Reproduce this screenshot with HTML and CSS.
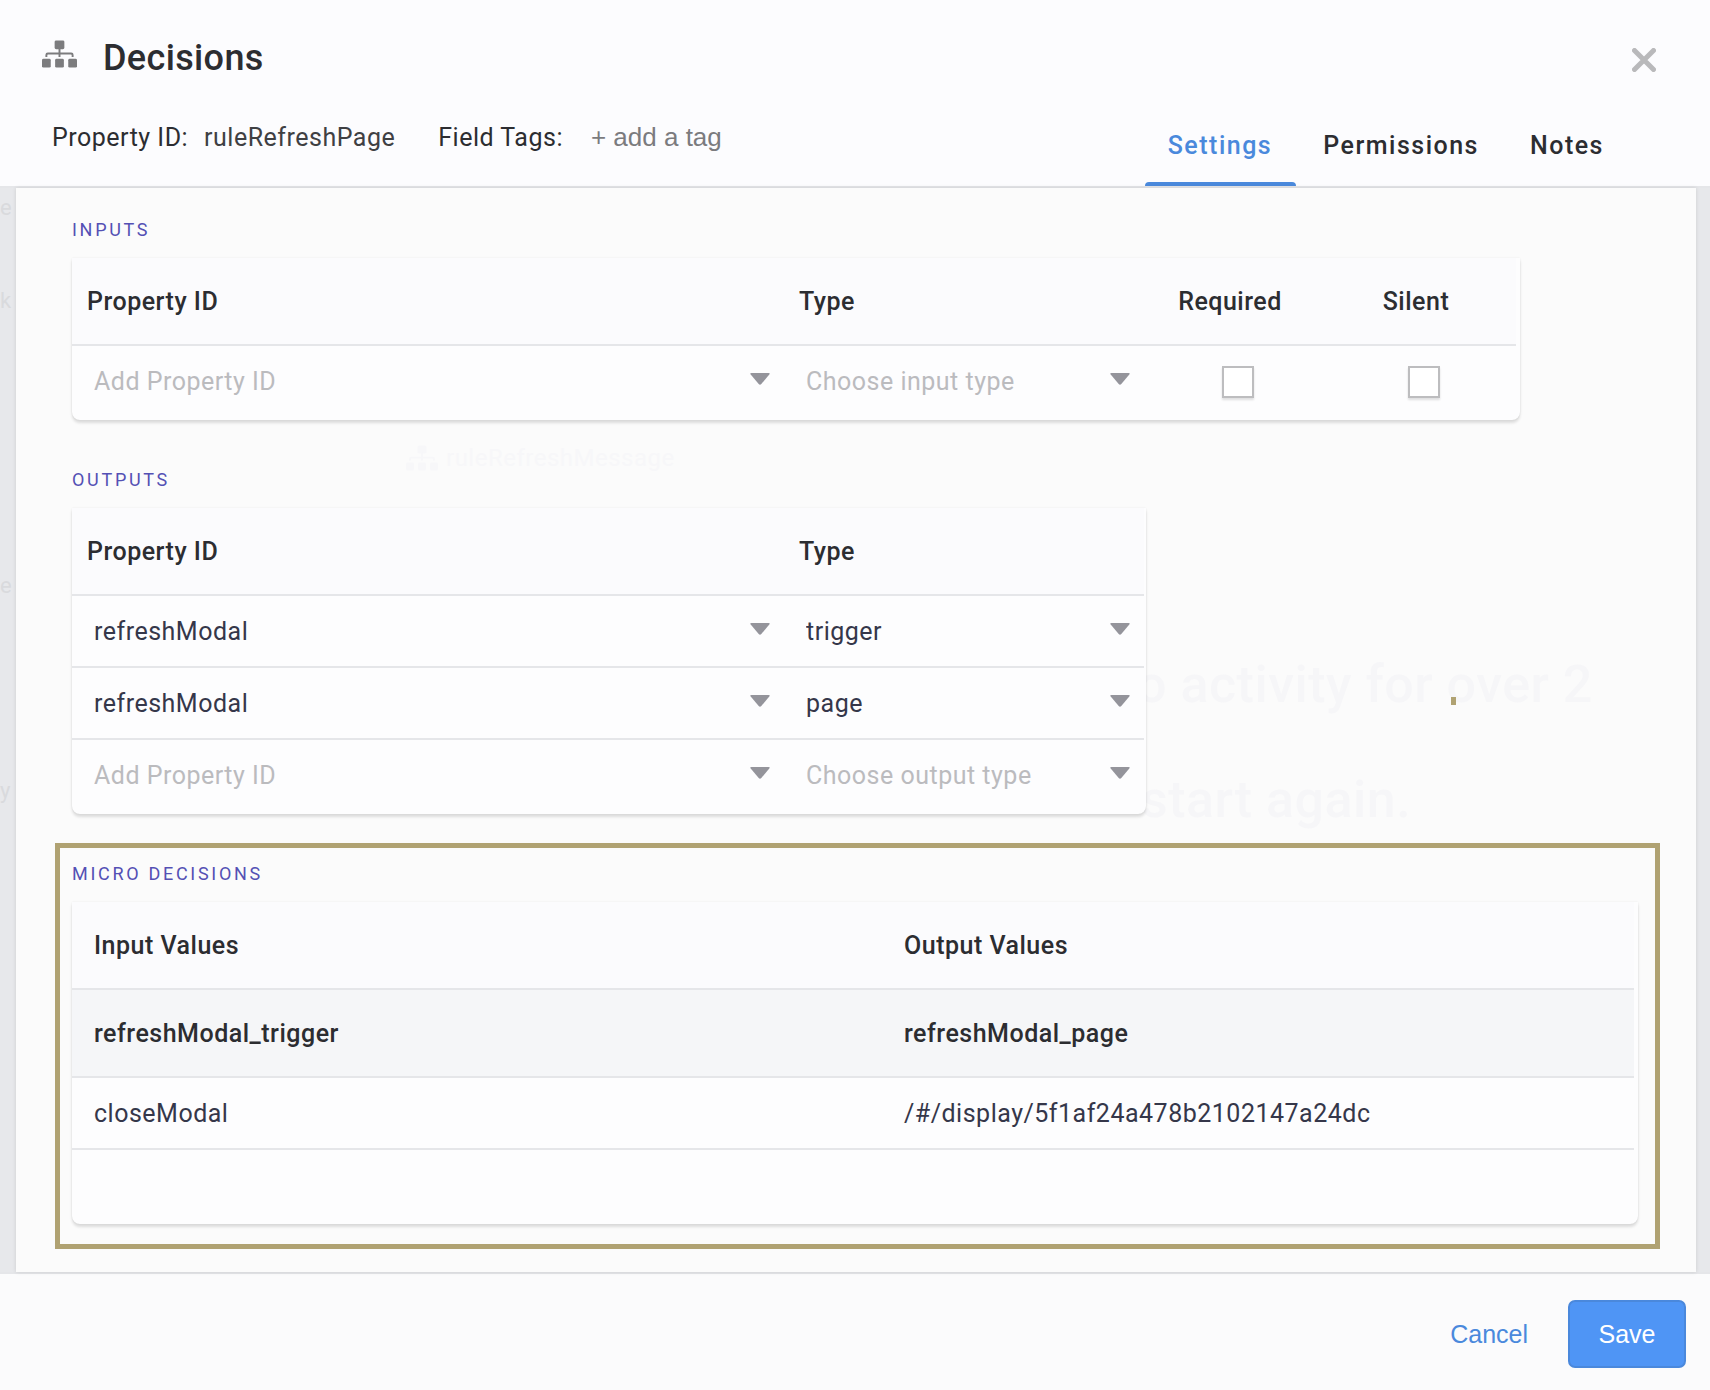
FILE: index.html
```html
<!DOCTYPE html>
<html lang="en">
<head>
<meta charset="utf-8">
<title>Decisions</title>
<meta name="viewport" content="width=device-width, initial-scale=1">
<link rel="stylesheet" href="styles.css">
</head>
<body>
<svg class="defs" aria-hidden="true">
  <symbol id="caret" viewBox="0 0 20 12"><path d="M1.500 0h17q2 0 .8 1.500l-8 9.600q-1.300 1.300-2.600 0l-8-9.600Q-.5 0 1.500 0z"/></symbol>
  <symbol id="tree" viewBox="0 0 36 28">
    <rect x="13" y="0" width="10" height="9" rx="1.500"/>
    <rect x="0" y="19" width="9" height="9" rx="1.500"/>
    <rect x="13.500" y="19" width="9" height="9" rx="1.500"/>
    <rect x="27" y="19" width="9" height="9" rx="1.500"/>
    <path d="M18 8v9M4.500 17v-2q0-1.500 1.500-1.500h24q1.500 0 1.500 1.500v2" fill="none" stroke="currentColor" stroke-width="2"/>
  </symbol>
</svg>
<div class="dialog" role="dialog" aria-labelledby="title">
  <header class="header">
    <div class="title-row">
      <svg class="title-icon" aria-hidden="true"><use href="#tree"/></svg>
      <h1 class="title" id="title">Decisions</h1>
      <button class="close" type="button" aria-label="Close">
        <svg viewBox="0 0 24 24" width="24" height="24" aria-hidden="true"><path d="M2.500 2.500l19 19M21.500 2.500l-19 19"/></svg>
      </button>
    </div>
    <div class="meta-row">
      <div class="meta">
        <span>Property ID:</span>
        <span class="meta-value">ruleRefreshPage</span>
        <span class="meta-tags">Field Tags:</span>
        <button class="add-tag" type="button">+ add a tag</button>
      </div>
      <nav class="tabs">
        <a class="tab tab-active" href="#settings" aria-current="page">Settings</a>
        <a class="tab" href="#permissions">Permissions</a>
        <a class="tab" href="#notes">Notes</a>
      </nav>
    </div>
  </header>

  <main class="body">
    <div class="edge" aria-hidden="true">
      <span class="edge-1">e</span>
      <span class="edge-2">k</span>
      <span class="edge-3">e</span>
      <span class="edge-4">y</span>
    </div>
    <div class="panel" id="settings">
      <div class="ghost" aria-hidden="true">
        <span class="ghost-rule"><svg><use href="#tree"/></svg>ruleRefreshMessage</span>
        <span class="ghost-line ghost-first">o activity for over 2</span>
        <span class="ghost-line ghost-second">start again.</span>
        <span class="marker"></span>
      </div>

      <section class="section">
        <h2 class="label">INPUTS</h2>
        <div class="card card-inputs">
          <table class="grid">
            <colgroup><col class="col-id"><col class="col-type"><col class="col-required"><col class="col-silent"></colgroup>
            <thead><tr><th>Property ID</th><th>Type</th><th class="center">Required</th><th class="center">Silent</th></tr></thead>
            <tbody>
              <tr>
                <td><div class="pick"><select class="empty" aria-label="Input property ID"><option>Add Property ID</option></select><svg><use href="#caret"/></svg></div></td>
                <td><div class="pick"><select class="empty" aria-label="Input type"><option>Choose input type</option></select><svg><use href="#caret"/></svg></div></td>
                <td class="tick"><input type="checkbox" aria-label="Required"></td>
                <td class="tick"><input type="checkbox" aria-label="Silent"></td>
              </tr>
            </tbody>
          </table>
        </div>
      </section>

      <section class="section">
        <h2 class="label">OUTPUTS</h2>
        <div class="card card-outputs">
          <table class="grid">
            <colgroup><col class="col-id"><col class="col-type"></colgroup>
            <thead><tr><th>Property ID</th><th>Type</th></tr></thead>
            <tbody>
              <tr>
                <td><div class="pick"><select aria-label="Output 1 property ID"><option>refreshModal</option></select><svg><use href="#caret"/></svg></div></td>
                <td><div class="pick"><select aria-label="Output 1 type"><option>trigger</option></select><svg><use href="#caret"/></svg></div></td>
              </tr>
              <tr>
                <td><div class="pick"><select aria-label="Output 2 property ID"><option>refreshModal</option></select><svg><use href="#caret"/></svg></div></td>
                <td><div class="pick"><select aria-label="Output 2 type"><option>page</option></select><svg><use href="#caret"/></svg></div></td>
              </tr>
              <tr>
                <td><div class="pick"><select class="empty" aria-label="New output property ID"><option>Add Property ID</option></select><svg><use href="#caret"/></svg></div></td>
                <td><div class="pick"><select class="empty" aria-label="New output type"><option>Choose output type</option></select><svg><use href="#caret"/></svg></div></td>
              </tr>
            </tbody>
          </table>
        </div>
      </section>

      <section class="section highlight">
        <h2 class="label">MICRO DECISIONS</h2>
        <div class="card">
          <table class="grid values">
            <colgroup><col class="col-half"><col></colgroup>
            <thead>
              <tr><th>Input Values</th><th>Output Values</th></tr>
              <tr class="keys"><th>refreshModal_trigger</th><th>refreshModal_page</th></tr>
            </thead>
            <tbody>
              <tr><td>closeModal</td><td>/#/display/5f1af24a478b2102147a24dc</td></tr>
              <tr><td></td><td></td></tr>
            </tbody>
          </table>
        </div>
      </section>
    </div>
  </main>

  <footer class="footer">
    <button class="cancel" type="button">Cancel</button>
    <button class="save" type="button">Save</button>
  </footer>
</div>
</body>
</html>
```
FILE: styles.css
```css
* { box-sizing: border-box; }

body {
  margin: 0;
  background: #e7e8eb;
  color: #2c2d31;
  font: 400 25px/32px Roboto, "Liberation Sans", sans-serif;
  letter-spacing: 0.02em;
}

button, select { font: inherit; letter-spacing: inherit; color: inherit; }
button { padding: 0; border: 0; background: none; cursor: pointer; }

.defs { display: block; width: 0; height: 0; }

.dialog { display: flex; flex-direction: column; min-height: 100vh; }

/* Header */
.header { background: #fcfcfe; border-bottom: 2px solid #e5e6e9; }

.title-row { display: flex; align-items: center; height: 110px; padding: 6px 54px 0 42px; }
.title-icon { width: 35px; height: 28px; margin-bottom: 8px; fill: #7c7c7e; color: #7c7c7e; }
.title { flex: 1; margin: 0 0 0 26px; font-size: 36px; line-height: 44px; font-weight: 500; letter-spacing: 0.01em; }
.close { display: flex; padding-top: 3px; }
.close svg { fill: none; stroke: #b9b9bb; stroke-width: 5; stroke-linecap: round; }

.meta-row { display: flex; justify-content: space-between; height: 76px; padding: 0 82px 0 52px; }
.meta { display: flex; align-items: baseline; padding-top: 11px; }
.meta-value { margin-left: 16px; color: #3f4043; }
.meta-tags { margin-left: 43px; }
.add-tag { margin-left: 28px; color: #7b7b7e; font: 26px/32px "Liberation Sans", sans-serif; letter-spacing: 0; }

.tabs { display: flex; gap: 4px; }
.tab { position: relative; padding: 20px 24px 0 23px; border-radius: 4px 4px 0 0; color: #2c2d31; font-weight: 500; letter-spacing: 0.06em; text-decoration: none; }
.tab-active { color: #4a89dc; }
.tab-active::after { content: ""; position: absolute; inset: auto 0 0; height: 4px; border-radius: 4px 4px 0 0; background: #4a89dc; }

/* Scrolled panel */
.body { position: relative; flex: 1; display: flex; padding: 0 14px 0 16px; }
.panel { position: relative; flex: 1; display: flex; flex-direction: column; gap: 44px; padding: 26px 36px 23px 39px; background: #fbfbfb; box-shadow: 0 0 4px rgba(0, 0, 0, 0.12); }

.section { position: relative; padding: 0 17px; }
.label { margin: 0 0 12px; color: #5450b4; font-size: 18px; line-height: 32px; font-weight: 400; letter-spacing: 0.15em; }

.card { padding: 0 4px 4px 0; border-radius: 0 0 8px 8px; background: #fdfdfe; box-shadow: 0 3px 3px rgba(0, 0, 0, 0.12), 0 0 2px rgba(0, 0, 0, 0.08); }
.card-inputs { max-width: 1448px; }
.card-outputs { max-width: 1074px; padding-right: 2px; }

.highlight { padding: 10px 17px 20px 12px; margin-top: -15px; border: 5px solid #b0a272; }

/* Tables */
.grid { width: 100%; border-collapse: separate; border-spacing: 0; table-layout: fixed; }
.grid th, .grid td { padding: 2px 15px 0; border-bottom: 2px solid #e5e6e9; text-align: left; white-space: nowrap; }
.grid th { height: 88px; font-weight: 500; background: #fbfbfd; }
.grid td { height: 72px; padding-right: 14px; padding-left: 22px; color: #35374a; }
.grid tbody tr:last-child td { height: 70px; border-bottom: 0; }
.grid .center { padding: 2px 0 0; text-align: center; }
.grid .tick { padding: 0 0 0 16px; text-align: center; }
.grid.values th { padding-left: 22px; }
.grid .keys th { background: #f5f6f8; }

.col-id { width: 712px; }
.col-type { width: 360px; }
.col-required { width: 172px; }
.col-half { width: 810px; }

.pick { display: grid; align-items: center; }
.pick select, .pick svg { grid-area: 1 / 1; }
.pick select { width: 100%; height: 32px; padding: 0; border: 0; background: none; appearance: none; outline: 0; }
.pick .empty { color: #bbbbbe; }
.pick svg { justify-self: end; width: 20px; height: 12px; margin-bottom: 6px; fill: #94949b; pointer-events: none; }

.tick input { appearance: none; display: inline-block; width: 32px; height: 32px; margin: 0; border: 2px solid #bdbdbf; background: #fff; box-shadow: 0 2px 2px rgba(0, 0, 0, 0.12); vertical-align: middle; }

/* Page showing faintly through the panel and beside it */
.ghost { position: absolute; inset: 0; }
.ghost span { position: absolute; white-space: nowrap; }
.ghost .ghost-rule { left: 390px; top: 254px; display: flex; align-items: center; gap: 8px; color: #f7f7f9; font-size: 24px; }
.ghost-rule svg { width: 32px; height: 26px; fill: #f7f7f9; }
.ghost-line { color: #f6f6f8; font-size: 52px; line-height: 60px; font-weight: 500; }
.ghost-first { left: 1121px; top: 467px; }
.ghost-second { left: 1125px; top: 582px; }
.marker { left: 1435px; top: 509px; width: 5px; height: 8px; background: #b0a272; }

.edge { position: absolute; inset: 0 auto 0 0; width: 16px; color: #d9dadd; font-size: 22px; }
.edge span { position: absolute; left: 0; }
.edge-1 { top: 4px; }
.edge-2 { top: 97px; }
.edge-3 { top: 382px; }
.edge-4 { top: 587px; }

/* Footer */
.footer { display: flex; justify-content: flex-end; align-items: center; gap: 40px; padding: 26px 24px 22px; border-top: 2px solid #e5e6e9; background: #fbfbfc; font: 25px/32px "Liberation Sans", sans-serif; letter-spacing: 0; }
.cancel { color: #4a89dc; }
.save { width: 118px; height: 68px; border: 2px solid #4a88dc; border-radius: 7px; background: #4f95f5; color: #fff; }
```
